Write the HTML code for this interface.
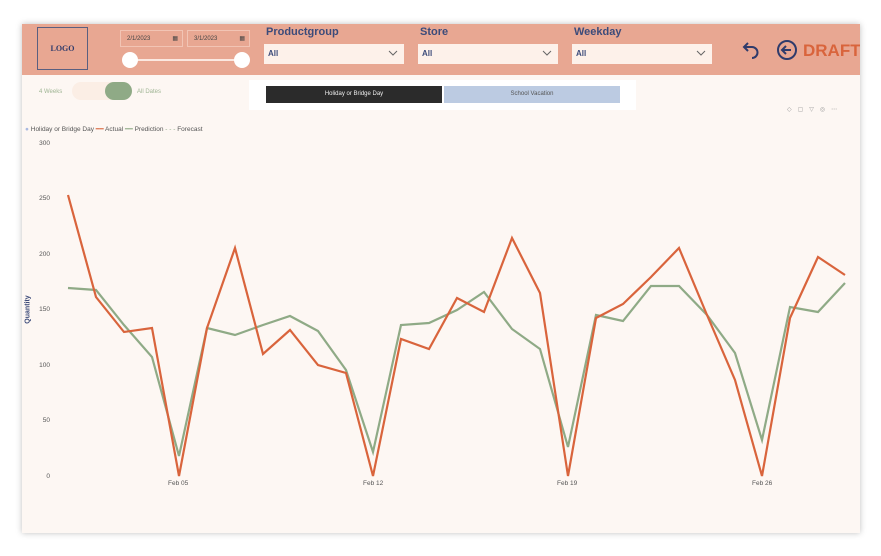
<!DOCTYPE html>
<html><head><meta charset="utf-8"><style>
*{margin:0;padding:0;box-sizing:border-box}
body{width:881px;height:556px;background:#fff;font-family:"Liberation Sans",sans-serif;position:relative;overflow:hidden}
.page{position:absolute;left:22px;top:24px;width:838px;height:509px;background:#fdf7f3;box-shadow:0 0 6px rgba(0,0,0,.25);overflow:hidden}
.band{position:absolute;left:0;top:0;width:838px;height:51px;background:#e8a792}
.logo{position:absolute;left:15px;top:3px;width:51px;height:43px;border:1px solid #5a5f80;font:bold 8px "Liberation Serif",serif;color:#2f3b6b;display:flex;align-items:center;justify-content:center}
.date{position:absolute;top:6px;width:63px;height:17px;border:1px solid #f2c4b4;font-size:6px;color:#444;padding:5px 0 0 6px}
.date span{position:absolute;right:4px;top:4px;font-size:6px}
.lbl{position:absolute;top:2px;font-size:11px;font-weight:bold;color:#3c4b7a}
.dd{position:absolute;top:20px;height:20px;background:#fdf1ea;font-size:8px;font-weight:bold;color:#3c4b7a;padding:5px 4px}
.dd svg{position:absolute;right:6px;top:6px}
.tick{position:absolute;left:6px;font-size:6.5px;color:#555;width:22px;text-align:right}
.xl{position:absolute;top:456px;font-size:6.5px;color:#555}
</style></head><body>
<div class="page">
<div class="band">
<div class="logo">LOGO</div>
<div class="date" style="left:98px">2/1/2023<span>▦</span></div>
<div class="date" style="left:165px">3/1/2023<span>▦</span></div>
<div style="position:absolute;left:108px;top:35px;width:112px;height:2px;background:#fbe8e0"></div>
<div style="position:absolute;left:100px;top:28px;width:16px;height:16px;border-radius:50%;background:#fff"></div>
<div style="position:absolute;left:212px;top:28px;width:16px;height:16px;border-radius:50%;background:#fff"></div>
<div class="lbl" style="left:244px">Productgroup</div>
<div class="dd" style="left:242px;width:140px">All<svg width="10" height="6"><path d="M1 1L5 5L9 1" stroke="#666" fill="none"/></svg></div>
<div class="lbl" style="left:398px">Store</div>
<div class="dd" style="left:396px;width:140px">All<svg width="10" height="6"><path d="M1 1L5 5L9 1" stroke="#666" fill="none"/></svg></div>
<div class="lbl" style="left:552px">Weekday</div>
<div class="dd" style="left:550px;width:140px">All<svg width="10" height="6"><path d="M1 1L5 5L9 1" stroke="#666" fill="none"/></svg></div>
<svg style="position:absolute;left:720px;top:16px" width="20" height="22"><path d="M6 3L2 7L6 11M2 7H10a5 5 0 0 1 0 11" stroke="#2f3b6b" stroke-width="2" fill="none"/></svg>
<svg style="position:absolute;left:754px;top:15px" width="22" height="22"><circle cx="11" cy="11" r="9" stroke="#2f3b6b" stroke-width="2" fill="none"/><path d="M15 11H7M10 7L6 11L10 15" stroke="#2f3b6b" stroke-width="2" fill="none"/></svg>
<div style="position:absolute;left:781px;top:17px;font-size:17px;font-weight:bold;color:#d9643c">DRAFT</div>
</div>
<div style="position:absolute;left:17px;top:65px;font-size:6px;color:#9fb594">4 Weeks</div>
<div style="position:absolute;left:50px;top:58px;width:60px;height:18px;border-radius:9px;background:#fbeee5"></div>
<div style="position:absolute;left:83px;top:58px;width:27px;height:18px;border-radius:9px;background:#8faa86"></div>
<div style="position:absolute;left:115px;top:65px;font-size:6px;color:#9fb594">All Dates</div>
<div style="position:absolute;left:227px;top:56px;width:387px;height:30px;background:#fff"></div>
<div style="position:absolute;left:244px;top:62px;width:176px;height:17px;background:#2b2b2b;color:#eee;font-size:6px;text-align:center;line-height:17px">Holiday or Bridge Day</div>
<div style="position:absolute;left:422px;top:62px;width:176px;height:17px;background:#bccbe2;color:#555;font-size:6px;text-align:center;line-height:17px">School Vacation</div>
<div style="position:absolute;left:765px;top:82px;font-size:6px;color:#999;letter-spacing:6px">◇▢▽◎⋯</div>
<div style="position:absolute;left:3px;top:101px;font-size:6.5px;color:#555;white-space:nowrap"><span style="color:#a8b8e0">●</span> Holiday or Bridge Day <span style="color:#d9643c">━━</span> Actual <span style="color:#8faa86">━━</span> Prediction <span style="color:#8faa86">- - -</span> Forecast</div>
<div class="tick" style="top:116px">300</div>
<div class="tick" style="top:171px">250</div>
<div class="tick" style="top:227px">200</div>
<div class="tick" style="top:282px">150</div>
<div class="tick" style="top:338px">100</div>
<div class="tick" style="top:393px">50</div>
<div class="tick" style="top:449px">0</div>
<div style="position:absolute;left:-8px;top:282px;transform:rotate(-90deg);font-size:7px;font-weight:bold;color:#3c4b7a">Quantity</div>
<div class="xl" style="left:146px">Feb 05</div>
<div class="xl" style="left:341px">Feb 12</div>
<div class="xl" style="left:535px">Feb 19</div>
<div class="xl" style="left:730px">Feb 26</div>
</div>
<svg style="position:absolute;left:0;top:0" width="881" height="556">
<polyline fill="none" stroke="#8faa86" stroke-width="2.2" points="68,288 96,290 124,325 152,357 179,456 207,328 235,335 263,325 290,316 318,331 346,370 373,452 401,325 429,323 457,310 484,292 512,329 540,349 568,447 596,315 623,321 651,286 679,286 707,315 735,353 762,440 790,307 818,312 845,283"/>
<polyline fill="none" stroke="#d9643c" stroke-width="2.2" points="68,195 96,297 124,332 152,328 179,476 207,328 235,248 263,354 290,330 318,365 346,373 373,476 401,339 429,349 457,298 484,312 512,238 540,293 568,476 596,318 623,304 651,277 679,248 707,315 735,380 762,476 790,318 818,257 845,275"/>
</svg>
</body></html>
